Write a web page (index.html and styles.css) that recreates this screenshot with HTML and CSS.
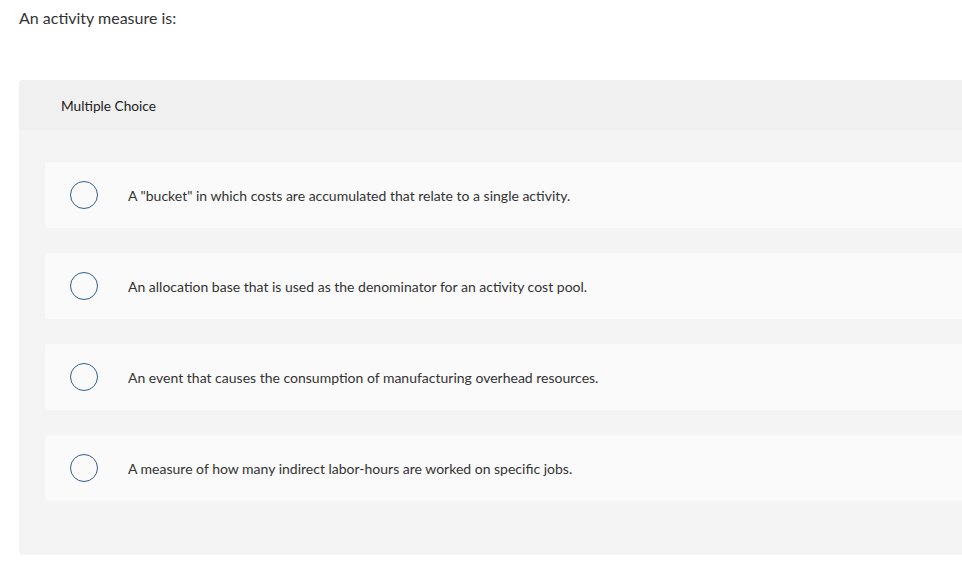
FILE: index.html
```html
<!DOCTYPE html>
<html>
<head>
<meta charset="utf-8">
<link rel="stylesheet" href="styles.css">
</head>
<body>
<div class="page">
  <p class="question">An activity measure is:</p>
  <div class="panel">
    <div class="panel-head">Multiple Choice</div>
    <div class="panel-body">
      <div class="option"><span class="radio"></span><span class="label">A "bucket" in which costs are accumulated that relate to a single activity.</span></div>
      <div class="option"><span class="radio"></span><span class="label">An allocation base that is used as the denominator for an activity cost pool.</span></div>
      <div class="option"><span class="radio"></span><span class="label">An event that causes the consumption of manufacturing overhead resources.</span></div>
      <div class="option"><span class="radio"></span><span class="label">A measure of how many indirect labor-hours are worked on specific jobs.</span></div>
    </div>
  </div>
</div>
</body>
</html>
```
FILE: styles.css
```css
html, body {
  margin: 0;
  padding: 0;
  background: #fff;
  overflow: hidden;
}
.page {
  width: 962px;
  height: 574px;
  overflow: hidden;
  padding-left: 19px;
  box-sizing: border-box;
  font-family: Lato, "Liberation Sans", sans-serif;
  color: #333;
}
.question {
  margin: 0;
  box-sizing: border-box;
  padding-top: 8px;
  font-size: 16px;
  line-height: 20px;
  height: 80px;
}
.panel {
  width: 980px;
  border-radius: 3px;
  overflow: hidden;
}
.panel-head {
  background: #f0f0f0;
  height: 50px;
  display: flex;
  align-items: center;
  padding-left: 42px;
  font-size: 13.7px;
  color: #222;
}
.panel-body {
  background: #f4f4f4;
  padding: 32px 0 54px 26px;
  display: flex;
  flex-direction: column;
  gap: 25px;
}
.option {
  background: #fafafa;
  border-radius: 3px;
  height: 66px;
  display: flex;
  align-items: center;
  padding-left: 25px;
}
.radio {
  width: 26px;
  height: 26px;
  border: 1.5px solid #2e5f8e;
  border-radius: 50%;
  flex: none;
}
.label {
  margin-left: 30px;
  font-size: 14px;
  color: #333;
}
```
